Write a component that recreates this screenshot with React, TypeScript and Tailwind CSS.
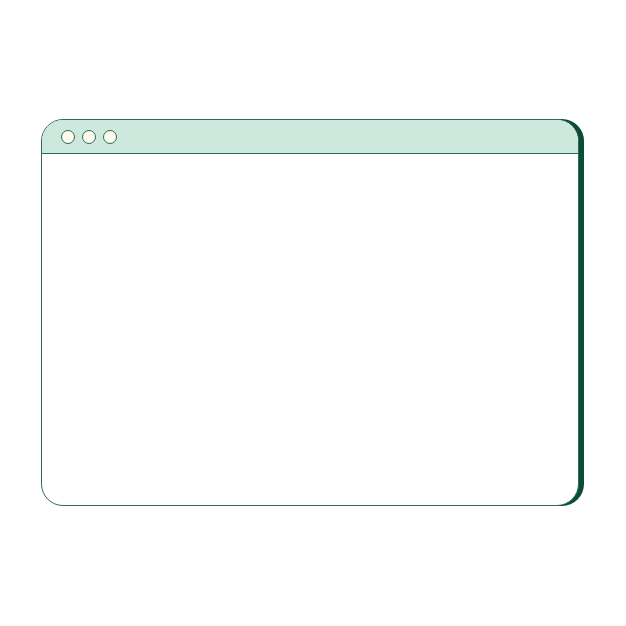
export default function App() {
  return (
    <div className="h-[626px] w-[626px] bg-white pl-[41px] pt-[119px]">
      <div className="flex h-[387px] w-[538px] flex-col overflow-hidden rounded-[22px] border border-[#2b6a57] bg-white shadow-[5px_0_0_0_#0c4b35]">
        <div className="flex h-[34px] shrink-0 items-center gap-[7px] border-b border-[#2b6a57] bg-[#cde9de] pl-[19px]">
          <span className="h-[14px] w-[14px] rounded-full border border-[#2b6a57] bg-[#fdfcee]" />
          <span className="h-[14px] w-[14px] rounded-full border border-[#2b6a57] bg-[#fdfcee]" />
          <span className="h-[14px] w-[14px] rounded-full border border-[#2b6a57] bg-[#fdfcee]" />
        </div>
        <div className="flex-1" />
      </div>
    </div>
  );
}
